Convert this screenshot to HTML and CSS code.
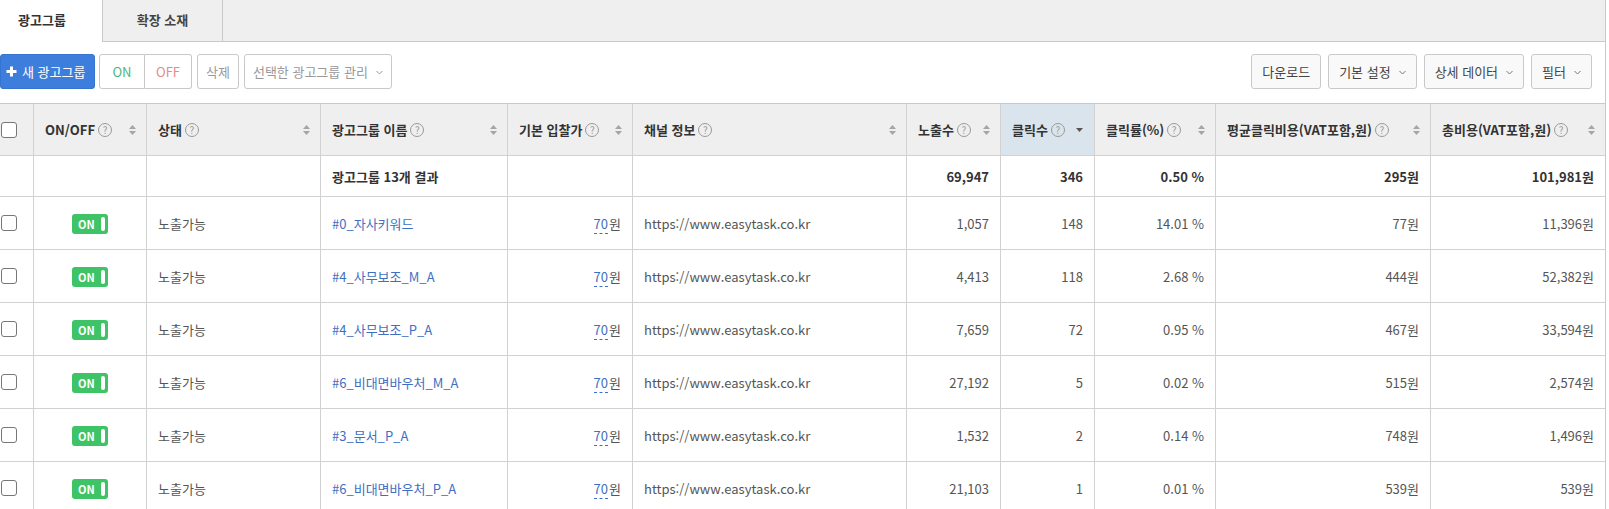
FILE: index.html
```html
<!DOCTYPE html>
<html lang="ko">
<head>
    <meta charset="UTF-8">
    <meta name="viewport" content="width=device-width, initial-scale=1.0">
    <title>광고그룹</title>
    <link rel="stylesheet" href="styles.css">
</head>
<body>
<div class="wrap">
    <div class="tabs">
        <a href="#" class="tab active">광고그룹</a>
        <a href="#" class="tab">확장 소재</a>
    </div>

    <div class="toolbar">
        <div class="tool-left">
            <button class="btn btn-primary">
                <svg class="plus" width="11" height="11" viewBox="0 0 11 11"><path d="M5.5 0.5v10M0.5 5.5h10" stroke="#fff" stroke-width="3"/></svg>
                새 광고그룹
            </button>
            <div class="btn-group">
                <button class="btn btn-on">ON</button>
                <button class="btn btn-off">OFF</button>
            </div>
            <button class="btn muted">삭제</button>
            <button class="btn muted">선택한 광고그룹 관리
                <svg class="caret" width="7" height="5" viewBox="0 0 7 5"><path d="M0.5 1l3 3 3-3" fill="none" stroke="#999"/></svg>
            </button>
        </div>
        <div class="tool-right">
            <button class="btn">다운로드</button>
            <button class="btn">기본 설정
                <svg class="caret" width="7" height="5" viewBox="0 0 7 5"><path d="M0.5 1l3 3 3-3" fill="none" stroke="#777"/></svg>
            </button>
            <button class="btn">상세 데이터
                <svg class="caret" width="7" height="5" viewBox="0 0 7 5"><path d="M0.5 1l3 3 3-3" fill="none" stroke="#777"/></svg>
            </button>
            <button class="btn">필터
                <svg class="caret" width="7" height="5" viewBox="0 0 7 5"><path d="M0.5 1l3 3 3-3" fill="none" stroke="#777"/></svg>
            </button>
        </div>
    </div>

    <table class="grid">
        <thead>
            <tr>
                <th class="c-chk"><input type="checkbox"></th>
                <th class="c-onoff"><div class="th-in"><span>ON/OFF<i class="help">?</i></span><svg class="sort" width="7" height="10" viewBox="0 0 7 10"><path d="M0 4L3.5 0 7 4zM0 6l3.5 4L7 6z"/></svg></div></th>
                <th class="c-state"><div class="th-in"><span>상태<i class="help">?</i></span><svg class="sort" width="7" height="10" viewBox="0 0 7 10"><path d="M0 4L3.5 0 7 4zM0 6l3.5 4L7 6z"/></svg></div></th>
                <th class="c-name"><div class="th-in"><span>광고그룹 이름<i class="help">?</i></span><svg class="sort" width="7" height="10" viewBox="0 0 7 10"><path d="M0 4L3.5 0 7 4zM0 6l3.5 4L7 6z"/></svg></div></th>
                <th class="c-bid"><div class="th-in"><span>기본 입찰가<i class="help">?</i></span><svg class="sort" width="7" height="10" viewBox="0 0 7 10"><path d="M0 4L3.5 0 7 4zM0 6l3.5 4L7 6z"/></svg></div></th>
                <th class="c-channel"><div class="th-in"><span>채널 정보<i class="help">?</i></span><svg class="sort" width="7" height="10" viewBox="0 0 7 10"><path d="M0 4L3.5 0 7 4zM0 6l3.5 4L7 6z"/></svg></div></th>
                <th class="c-imp"><div class="th-in"><span>노출수<i class="help">?</i></span><svg class="sort" width="7" height="10" viewBox="0 0 7 10"><path d="M0 4L3.5 0 7 4zM0 6l3.5 4L7 6z"/></svg></div></th>
                <th class="c-click sorted"><div class="th-in"><span>클릭수<i class="help">?</i></span><svg class="sort-down" width="7" height="4" viewBox="0 0 7 4"><path d="M0 0h7L3.5 4z"/></svg></div></th>
                <th class="c-ctr"><div class="th-in"><span>클릭률(%)<i class="help">?</i></span><svg class="sort" width="7" height="10" viewBox="0 0 7 10"><path d="M0 4L3.5 0 7 4zM0 6l3.5 4L7 6z"/></svg></div></th>
                <th class="c-cpc"><div class="th-in"><span>평균클릭비용(VAT포함,원)<i class="help">?</i></span><svg class="sort" width="7" height="10" viewBox="0 0 7 10"><path d="M0 4L3.5 0 7 4zM0 6l3.5 4L7 6z"/></svg></div></th>
                <th class="c-cost"><div class="th-in"><span>총비용(VAT포함,원)<i class="help">?</i></span><svg class="sort" width="7" height="10" viewBox="0 0 7 10"><path d="M0 4L3.5 0 7 4zM0 6l3.5 4L7 6z"/></svg></div></th>
            </tr>
        </thead>
        <tbody>
            <tr class="summary">
                <td></td>
                <td></td>
                <td></td>
                <td>광고그룹 13개 결과</td>
                <td></td>
                <td></td>
                <td class="num">69,947</td>
                <td class="num">346</td>
                <td class="num">0.50 %</td>
                <td class="num">295원</td>
                <td class="num">101,981원</td>
            </tr>
            <tr>
                <td><input type="checkbox"></td>
                <td class="center"><span class="toggle">ON<i class="knob"></i></span></td>
                <td>노출가능</td>
                <td><a href="#" class="link">#0_자사키워드</a></td>
                <td class="num"><a href="#" class="bid">70</a>원</td>
                <td>https://www.easytask.co.kr</td>
                <td class="num">1,057</td>
                <td class="num">148</td>
                <td class="num">14.01 %</td>
                <td class="num">77원</td>
                <td class="num">11,396원</td>
            </tr>
            <tr>
                <td><input type="checkbox"></td>
                <td class="center"><span class="toggle">ON<i class="knob"></i></span></td>
                <td>노출가능</td>
                <td><a href="#" class="link">#4_사무보조_M_A</a></td>
                <td class="num"><a href="#" class="bid">70</a>원</td>
                <td>https://www.easytask.co.kr</td>
                <td class="num">4,413</td>
                <td class="num">118</td>
                <td class="num">2.68 %</td>
                <td class="num">444원</td>
                <td class="num">52,382원</td>
            </tr>
            <tr>
                <td><input type="checkbox"></td>
                <td class="center"><span class="toggle">ON<i class="knob"></i></span></td>
                <td>노출가능</td>
                <td><a href="#" class="link">#4_사무보조_P_A</a></td>
                <td class="num"><a href="#" class="bid">70</a>원</td>
                <td>https://www.easytask.co.kr</td>
                <td class="num">7,659</td>
                <td class="num">72</td>
                <td class="num">0.95 %</td>
                <td class="num">467원</td>
                <td class="num">33,594원</td>
            </tr>
            <tr>
                <td><input type="checkbox"></td>
                <td class="center"><span class="toggle">ON<i class="knob"></i></span></td>
                <td>노출가능</td>
                <td><a href="#" class="link">#6_비대면바우처_M_A</a></td>
                <td class="num"><a href="#" class="bid">70</a>원</td>
                <td>https://www.easytask.co.kr</td>
                <td class="num">27,192</td>
                <td class="num">5</td>
                <td class="num">0.02 %</td>
                <td class="num">515원</td>
                <td class="num">2,574원</td>
            </tr>
            <tr>
                <td><input type="checkbox"></td>
                <td class="center"><span class="toggle">ON<i class="knob"></i></span></td>
                <td>노출가능</td>
                <td><a href="#" class="link">#3_문서_P_A</a></td>
                <td class="num"><a href="#" class="bid">70</a>원</td>
                <td>https://www.easytask.co.kr</td>
                <td class="num">1,532</td>
                <td class="num">2</td>
                <td class="num">0.14 %</td>
                <td class="num">748원</td>
                <td class="num">1,496원</td>
            </tr>
            <tr>
                <td><input type="checkbox"></td>
                <td class="center"><span class="toggle">ON<i class="knob"></i></span></td>
                <td>노출가능</td>
                <td><a href="#" class="link">#6_비대면바우처_P_A</a></td>
                <td class="num"><a href="#" class="bid">70</a>원</td>
                <td>https://www.easytask.co.kr</td>
                <td class="num">21,103</td>
                <td class="num">1</td>
                <td class="num">0.01 %</td>
                <td class="num">539원</td>
                <td class="num">539원</td>
            </tr>
        </tbody>
    </table>
</div>
</body>
</html>
```

FILE: styles.css
```css
html, body {
    margin: 0;
    overflow: hidden;
}
body {
    font-family: "Noto Sans CJK KR", "Noto Sans", sans-serif;
    font-size: 13px;
    color: #333;
    background-color: #fff;
}
.wrap {
    width: 1605px;
    border-right: 1px solid #c9c9c9;
}

/* tabs */
.tabs {
    display: flex;
    height: 41px;
    background-color: #efefef;
    border-bottom: 1px solid #c9c9c9;
}
.tab {
    box-sizing: border-box;
    width: 121px;
    height: 41px;
    line-height: 40px;
    text-align: center;
    font-weight: bold;
    color: #444;
    text-decoration: none;
    border-left: 1px solid #c9c9c9;
    border-right: 1px solid #c9c9c9;
}
.tab.active {
    width: 102px;
    height: 42px;
    padding-left: 18px;
    text-align: left;
    background-color: #fff;
    border: none;
    color: #333;
}

/* toolbar */
.toolbar {
    display: flex;
    justify-content: space-between;
    padding: 12px 13px 14px 0;
}
.tool-left, .tool-right {
    display: flex;
    gap: 5px;
}
.tool-right {
    gap: 7px;
}
.btn {
    box-sizing: border-box;
    display: inline-flex;
    align-items: center;
    gap: 8px;
    height: 35px;
    padding: 0 10px;
    font-family: inherit;
    font-size: 13px;
    color: #444;
    background-color: #f9f9f9;
    border: 1px solid #c9c9c9;
    border-radius: 3px;
    cursor: pointer;
}
.btn-primary {
    gap: 5px;
    width: 95px;
    padding: 0 0 0 5px;
    color: #fff;
    background-color: #3d7ddb;
    border-color: #3574d2;
}
.btn-group {
    display: flex;
    margin-left: -1px;
}
.btn-group .btn {
    background-color: #fff;
    width: 46px;
    justify-content: center;
    padding: 0;
}
.btn-group .btn-on {
    border-radius: 3px 0 0 3px;
    color: #4db57d;
}
.btn-group .btn-off {
    width: 47px;
    border-left: none;
    border-radius: 0 3px 3px 0;
    color: #e58989;
}
.btn.muted {
    background-color: #fff;
    color: #999;
    padding: 0 8px;
}
.caret {
    margin-top: 1px;
}

/* table */
.grid {
    table-layout: fixed;
    width: 1605px;
    border-collapse: separate;
    border-spacing: 0;
    border-top: 1px solid #c9c9c9;
}
.grid th, .grid td {
    box-sizing: border-box;
    padding: 0 11px;
    border-right: 1px solid #d2d2d2;
    border-bottom: 1px solid #d2d2d2;
    white-space: nowrap;
    text-align: left;
    vertical-align: middle;
}
.grid th:last-child, .grid td:last-child {
    border-right: none;
}
.grid th {
    height: 52px;
    background-color: #efefef;
    font-weight: bold;
    color: #333;
}
.grid th.sorted {
    background-color: #dae4ec;
}
.grid td {
    height: 53px;
    color: #555;
}
.grid tr.summary td {
    height: 41px;
    font-weight: bold;
    color: #333;
}
.grid th:first-child, .grid td:first-child {
    padding: 0 0 0 1px;
}
.c-chk { width: 34px; }
.c-onoff { width: 113px; }
.c-state { width: 174px; }
.c-name { width: 187px; }
.c-bid { width: 125px; }
.c-channel { width: 274px; }
.c-imp { width: 94px; }
.c-click { width: 94px; }
.c-ctr { width: 121px; }
.c-cpc { width: 215px; }
.c-cost { width: 174px; }

.th-in {
    display: flex;
    align-items: center;
    justify-content: space-between;
}
.th-in span {
    display: flex;
    align-items: center;
}
.help {
    box-sizing: border-box;
    display: inline-block;
    width: 14px;
    height: 14px;
    margin-left: 3px;
    border: 1px solid #999;
    border-radius: 50%;
    font-style: normal;
    font-weight: normal;
    font-size: 10px;
    line-height: 12px;
    text-align: center;
    color: #999;
}
.sort {
    fill: #a5a5a5;
    margin-right: -1px;
}
.sort-down {
    fill: #555;
}

input[type="checkbox"] {
    appearance: none;
    display: block;
    width: 16px;
    height: 16px;
    margin: 0;
    border: 1px solid #777;
    border-radius: 3px;
    background-color: #fff;
}

.num {
    text-align: right !important;
}
.center {
    text-align: center !important;
}
.toggle {
    box-sizing: border-box;
    display: inline-flex;
    align-items: center;
    justify-content: space-between;
    width: 36px;
    height: 20px;
    padding: 0 3px 0 6px;
    border-radius: 3px;
    background-color: #3ec466;
    color: #fff;
    font-size: 11px;
    font-weight: bold;
    vertical-align: middle;
}
.knob {
    width: 4px;
    height: 14px;
    border-radius: 2px;
    background-color: #fff;
}
.link {
    color: #3f6fc2;
    text-decoration: none;
}
.bid {
    color: #3f6fc2;
    text-decoration: none;
    border-bottom: 1px dashed #3f6fc2;
    margin-right: 1px;
}
```
